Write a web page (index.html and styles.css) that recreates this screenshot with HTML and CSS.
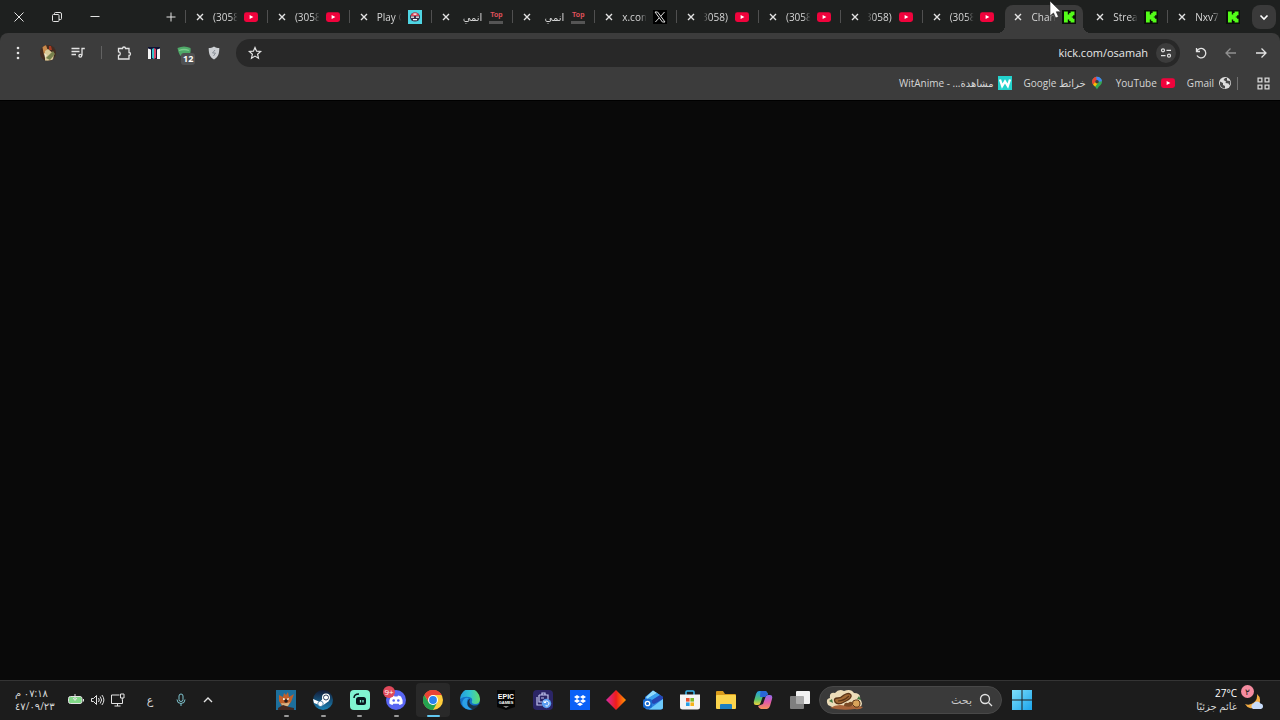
FILE: index.html
```html
<!DOCTYPE html>
<html lang="ar" dir="rtl">
  <head>
    <meta charset="UTF-8" />
    <meta name="viewport" content="width=device-width, initial-scale=1.0" />
    <title>kick.com/osamah</title>
    <link rel="stylesheet" href="styles.css">
  </head>

  <body>
    <!-- shared icons -->
    <svg class="sprite" aria-hidden="true">
      <symbol id="close" viewBox="0 0 10 10"><path d="M2 2l6 6M8 2l-6 6" stroke="#e3e3e3" stroke-width="1.4" /></symbol>
      <symbol id="youtube" viewBox="0 0 14 14">
        <rect x="0" y="2.3" width="14" height="9.6" rx="2.4" fill="#f0033c" />
        <path d="M5.6 5.1l3.8 2-3.8 2z" fill="#fff" />
      </symbol>
      <symbol id="kick" viewBox="0 0 14 14">
        <rect width="14" height="14" fill="#0b0f0a" />
        <path d="M2 1.500h3.800v3h1.400V3h1.400V1.500h3.900v3.800h-1.400v1.300H9.800v.9h1.300v1.300h1.400v3.700H8.600v-1.400H7.200V9.600H5.800v2.900H2z" fill="#53fc18" />
      </symbol>
    </svg>

    <header>
      <div class="tabstrip">
        <button class="tab-search" aria-label="البحث في علامات التبويب">
          <svg viewBox="0 0 24 24"><path d="M8.500 10.500l3.500 3.500 3.500-3.500" /></svg>
        </button>
        <div class="tabs">
          <div class="tab">
            <svg class="favicon"><use href="#kick" /></svg>
            <span class="title" dir="ltr">Nxv7</span>
            <button class="close" aria-label="إغلاق"><svg><use href="#close" /></svg></button>
          </div>
          <div class="tab no-line">
            <svg class="favicon"><use href="#kick" /></svg>
            <span class="title" dir="ltr">Stream</span>
            <button class="close" aria-label="إغلاق"><svg><use href="#close" /></svg></button>
          </div>
          <div class="tab active">
            <svg class="favicon"><use href="#kick" /></svg>
            <span class="title" dir="ltr">Channel</span>
            <button class="close" aria-label="إغلاق"><svg><use href="#close" /></svg></button>
          </div>
          <div class="tab">
            <svg class="favicon"><use href="#youtube" /></svg>
            <span class="title" dir="ltr">(3058)</span>
            <button class="close" aria-label="إغلاق"><svg><use href="#close" /></svg></button>
          </div>
          <div class="tab">
            <svg class="favicon"><use href="#youtube" /></svg>
            <span class="title"><bdo dir="ltr">(3058)</bdo></span>
            <button class="close" aria-label="إغلاق"><svg><use href="#close" /></svg></button>
          </div>
          <div class="tab">
            <svg class="favicon"><use href="#youtube" /></svg>
            <span class="title" dir="ltr">(3058)</span>
            <button class="close" aria-label="إغلاق"><svg><use href="#close" /></svg></button>
          </div>
          <div class="tab">
            <svg class="favicon"><use href="#youtube" /></svg>
            <span class="title"><bdo dir="ltr">(3058)</bdo></span>
            <button class="close" aria-label="إغلاق"><svg><use href="#close" /></svg></button>
          </div>
          <div class="tab">
            <svg class="favicon" viewBox="0 0 14 14">
              <rect width="14" height="14" fill="#000" />
              <path d="M2 2h2.600l7.400 10H9.400z" fill="none" stroke="#ddd" />
              <path d="M11.500 2L7.700 6.300M6.200 7.900L2.400 12" stroke="#ddd" />
            </svg>
            <span class="title" dir="ltr">x.com</span>
            <button class="close" aria-label="إغلاق"><svg><use href="#close" /></svg></button>
          </div>
          <div class="tab">
            <span class="favicon top" dir="ltr">Top</span>
            <span class="title">انمي</span>
            <button class="close" aria-label="إغلاق"><svg><use href="#close" /></svg></button>
          </div>
          <div class="tab">
            <span class="favicon top" dir="ltr">Top</span>
            <span class="title">انمي</span>
            <button class="close" aria-label="إغلاق"><svg><use href="#close" /></svg></button>
          </div>
          <div class="tab">
            <svg class="favicon" viewBox="0 0 14 14">
              <rect width="14" height="14" fill="#4fd5e3" />
              <ellipse cx="7" cy="7" rx="5" ry="4.600" fill="#38304a" />
              <path d="M3 6a4 3.500 0 0 1 8 0z" fill="#d8465a" />
              <path d="M5.500 4.200h3M3 7.200h3M8 7.200h3M5 9.700h4" stroke="#fff" stroke-width="1.200" />
            </svg>
            <span class="title" dir="ltr">Play Games</span>
            <button class="close" aria-label="إغلاق"><svg><use href="#close" /></svg></button>
          </div>
          <div class="tab">
            <svg class="favicon"><use href="#youtube" /></svg>
            <span class="title" dir="ltr">(3058)</span>
            <button class="close" aria-label="إغلاق"><svg><use href="#close" /></svg></button>
          </div>
          <div class="tab">
            <svg class="favicon"><use href="#youtube" /></svg>
            <span class="title" dir="ltr">(3058)</span>
            <button class="close" aria-label="إغلاق"><svg><use href="#close" /></svg></button>
          </div>
        </div>
        <button class="new-tab" aria-label="علامة تبويب جديدة">
          <svg viewBox="0 0 12 12"><path d="M6 1.500v9M1.500 6h9" /></svg>
        </button>
        <div class="window-buttons">
          <button aria-label="تصغير"><svg viewBox="0 0 12 12"><path d="M1.500 5.500h9" /></svg></button>
          <button aria-label="استعادة"><svg viewBox="0 0 12 12"><rect x="1.500" y="3.500" width="6.500" height="7" rx="1" /><path d="M3.500 3.500v-1q0-1 1-1h4.500q1.500 0 1.500 1.500v4.500q0 1-1 1H8" /></svg></button>
          <button aria-label="إغلاق"><svg viewBox="0 0 12 12"><path d="M1.500 1.500l9 9M10.500 1.500l-9 9" /></svg></button>
        </div>
      </div>

      <div class="toolbar">
        <button class="tool" aria-label="رجوع"><svg viewBox="0 0 16 16"><path d="M3 8h10M8.500 3.500L13 8l-4.500 4.500" /></svg></button>
        <button class="tool dim" aria-label="تقدم"><svg viewBox="0 0 16 16"><path d="M13 8H3M7.500 3.500L3 8l4.500 4.500" /></svg></button>
        <button class="tool" aria-label="إعادة التحميل"><svg viewBox="0 0 16 16"><path d="M3.500 3v3.500H7M3.800 6.200A4.700 4.700 0 1 1 4 10.500" /></svg></button>
        <div class="omnibox">
          <button class="site-info" aria-label="معلومات الموقع">
            <svg viewBox="0 0 12 12"><circle cx="3" cy="3.300" r="1.500" /><path d="M6.500 3.300h4.500M1 8.700h4.500" /><circle cx="9" cy="8.700" r="1.500" /></svg>
          </button>
          <input type="text" dir="ltr" value="kick.com/osamah" aria-label="شريط العناوين">
          <button class="star" aria-label="إضافة إشارة">
            <svg viewBox="0 0 16 16"><path d="M8 2.500l1.600 3.700 4 .3-3 2.700.9 4L8 11.100l-3.500 2.100.9-4-3-2.700 4-.3z" /></svg>
          </button>
        </div>
        <button class="tool" aria-label="Shield">
          <svg viewBox="0 0 16 16"><path d="M8 1.500c1.600 1.200 3.400 1.500 5.300 1.500 0 5.500-1 9-5.300 11.500C3.700 12 2.700 8.500 2.700 3c1.900 0 3.700-.3 5.300-1.500z" fill="#cdd0d4" stroke="none" /><path d="M9 5L6.500 8h3L7.500 11" stroke="#8a9098" stroke-width="1" /></svg>
        </button>
        <button class="tool extension" aria-label="إضافة">
          <svg viewBox="0 0 16 16"><path d="M1.500 3Q8 0 14.500 3q1 5-2.500 8l-4 2Q3 12 1.500 3z" fill="#4fa968" stroke="none" /><path d="M3 5.500Q8 3.500 13 5.500" stroke="#7ccc8e" /></svg>
          <span class="count">12</span>
        </button>
        <button class="tool" aria-label="إضافة">
          <svg viewBox="0 0 16 16"><g stroke="none"><rect x="2" y="2" width="12" height="12" fill="#101336" /><path d="M2 3.500l3 1V14H2zM14 3.500l-3 1V14h3z" fill="#f4f4f4" /><path d="M6 4l2-1v11l-2-1z" fill="#35c7cb" /><path d="M8 3l2 1v9l-2 1z" fill="#d94867" /></g></svg>
        </button>
        <button class="tool" aria-label="الإضافات">
          <svg viewBox="0 0 16 16"><path d="M2.500 3.500h4a1.500 1.500 0 0 1 3 0h3.500v4a1.500 1.500 0 0 1 0 3v3.500H2.500v-3.500a1.800 1.800 0 0 0 0-3.600z" /></svg>
        </button>
        <span class="divider"></span>
        <button class="tool" aria-label="الوسائط">
          <svg viewBox="0 0 16 16"><path d="M1.500 3.500h8M1.500 6.500h8M1.500 9.500h4.500M12 10.500V3.500h2.800" /><circle cx="10.300" cy="10.700" r="1.400" /></svg>
        </button>
        <button class="tool" aria-label="الملف الشخصي">
          <svg viewBox="0 0 16 16"><clipPath id="round"><circle cx="8" cy="8" r="8" /></clipPath><g clip-path="url(#round)" stroke="none"><rect width="16" height="16" fill="#432c20" /><path d="M2 0h4l2 6-4 4z" fill="#c88a4b" /><path d="M9 1h2l1 4H9z" fill="#a73a22" /><path d="M5 6l3-2 6 5-1 6-8 1z" fill="#d9cb9a" /><path d="M6 13l7-7 2 3-5 6z" fill="#76804c" /><path d="M4 8l3 2-2 3z" fill="#efe7c8" /></g></svg>
        </button>
        <button class="tool" aria-label="القائمة">
          <svg viewBox="0 0 16 16"><g fill="#e3e3e3" stroke="none"><circle cx="8" cy="3" r="1.300" /><circle cx="8" cy="8" r="1.300" /><circle cx="8" cy="13" r="1.300" /></g></svg>
        </button>
      </div>

      <nav class="bookmarks">
        <button class="apps" aria-label="التطبيقات">
          <svg viewBox="0 0 12 12"><path d="M1 1h3.500v3.500H1zM7.500 1H11v3.500H7.500zM1 7.500h3.500V11H1zM7.500 7.500H11V11H7.500z" /></svg>
        </button>
        <span class="line"></span>
        <a href="#">
          <svg viewBox="0 0 14 14"><circle cx="7" cy="7" r="6" fill="#dedede" /><path d="M2 5.500l3 1.500v2l2 1v2.500Q3 12 2 9zM7 2l-1.500 2L8 5.500 7.500 7l3 .5 1 2Q13 7 12 5L9 4.500V2z" fill="#4a4a4a" /></svg>
          <span>Gmail</span>
        </a>
        <a href="#"><svg><use href="#youtube" /></svg><span>YouTube</span></a>
        <a href="#">
          <svg viewBox="0 0 14 14"><clipPath id="pin"><path d="M7 .8a5 5 0 0 1 5 5C12 9 8.500 10 7 13.500 5.500 10 2 9 2 5.800a5 5 0 0 1 5-5z" /></clipPath><g clip-path="url(#pin)"><rect width="14" height="14" fill="#34a853" /><path d="M0 0h7v5L2 10H0z" fill="#ea4335" /><path d="M6 0h8v5L7 6z" fill="#4285f4" /><path d="M2 10l4-5 2 2-4 5z" fill="#fbbc04" /></g><circle cx="7" cy="5.700" r="1.800" fill="#3c3c3c" /></svg>
          <span>خرائط Google</span>
        </a>
        <a href="#">
          <svg viewBox="0 0 14 14"><rect width="14" height="14" fill="#23d3cd" /><path d="M2 3.500l2.200 6.500L7 5.500 9.800 10 12 3.500" fill="none" stroke="#fff" stroke-width="2.300" /></svg>
          <span>مشاهدة... - WitAnime</span>
        </a>
      </nav>
    </header>

    <main></main>

    <footer>
      <div class="weather">
        <div class="weather-icon">
          <svg viewBox="0 0 24 24"><path d="M16 5a8 8 0 1 1-12 10 9 9 0 0 0 12-10z" fill="#f5ad43" /><path d="M12 20a3 3 0 0 1 .5-5.500 4 4 0 0 1 7 0A2.800 2.800 0 0 1 20 20z" fill="#c8dcfa" /></svg>
          <span>٢</span>
        </div>
        <div class="weather-text">
          <b dir="ltr">27°C</b>
          <span>غائم جزئيًا</span>
        </div>
      </div>

      <button class="start" aria-label="ابدأ">
        <svg viewBox="0 0 20 20"><linearGradient id="win" x2="1" y2="1"><stop stop-color="#7fe0fb" /><stop offset="1" stop-color="#1ba4ea" /></linearGradient><path d="M0 0h9.500v9.500H0zM10.500 0H20v9.500h-9.500zM0 10.500h9.500V20H0zM10.500 10.500H20V20h-9.500z" fill="url(#win)" /></svg>
      </button>

      <div class="search">
        <svg class="magnifier" viewBox="0 0 14 14"><circle cx="6" cy="6" r="4.500" /><path d="M9.500 9.500l3.500 3.500" /></svg>
        <input type="search" placeholder="بحث" aria-label="بحث">
        <svg class="doodle" viewBox="0 0 38 22">
          <path d="M2 16Q-1 10 4 9 3 3 9 4q4-5 9-2 7-3 10 2 7 0 6 6 4 5 0 8H6z" fill="#ecdcb8" />
          <path d="M4 19q8-5 16-2 8-2 17 1-2 3-8 2-12 2-25-1z" fill="#a8643a" />
          <path d="M9 13q-2-4 3-4 3 0 6-3 5-3 7 0 1 3-5 6-8 5-11 1z" fill="#a26a35" stroke="#5c3518" stroke-width="1.300" />
          <path d="M12 12q6 0 11-5" fill="none" stroke="#5c3518" stroke-width="1.200" />
          <path d="M18 17q0-4 4-3 4-3 5 1-1 4-9 2z" fill="#7a4a25" />
          <path d="M27 12q6-3 7 2 0 5-5 4-4-2-2-6z" fill="#d9a35a" stroke="#5c3518" />
          <path d="M3 12l3-2 1 4zM31 10l2-3 2 4z" fill="#3f7a42" />
        </svg>
      </div>

      <div class="apps-list">
        <button aria-label="Task View"><svg viewBox="0 0 20 20"><rect x="6" y="1" width="14" height="13" rx="1" fill="#f1f1f1" /><rect x="0" y="6" width="14" height="13" rx="1" fill="#999" opacity=".8" /></svg></button>
        <button aria-label="Copilot"><svg viewBox="0 0 20 20"><linearGradient id="cpa" x2="0" y2="1"><stop stop-color="#219be9" /><stop offset=".6" stop-color="#58c46c" /><stop offset="1" stop-color="#f3d237" /></linearGradient><linearGradient id="cpb" x2="0" y2="1"><stop stop-color="#8e6bef" /><stop offset=".5" stop-color="#e35aa8" /><stop offset="1" stop-color="#f79358" /></linearGradient><path d="M6 1h6q2 0 3 3L10 6 7.500 13Q7 15 5 15H3q-3 0-2-4L3 4q1-3 3-3z" fill="url(#cpa)" /><path d="M14 19H8q-2 0-3-3l5-2 2.500-7Q13 5 15 5h2q3 0 2 4l-2 7q-1 3-3 3z" fill="url(#cpb)" /><path d="M7.500 1H12q2 0 3 4-2 0-2.500 2H7z" fill="#2866d8" /></svg></button>
        <button aria-label="File Explorer"><svg viewBox="0 0 20 20"><path d="M0 2q0-1 1-1h6l2 3h10q1 0 1 1v4H0z" fill="#d99b1c" /><rect y="5" width="20" height="14" rx="1" fill="#fbd44d" /><path d="M4 19v-4q0-1 1-1h10q1 0 1 1v4z" fill="#1d7fc4" /></svg></button>
        <button aria-label="Store"><svg viewBox="0 0 20 20"><path d="M6 5V2q0-1 1-1h6q1 0 1 1v3" fill="none" stroke="#39b6ed" stroke-width="1.500" /><path d="M0 4.500h20V17q0 2.500-2.500 2.500h-15Q0 19.500 0 17z" fill="#f4f4f4" /><path d="M6 8h3.600v3.600H6z" fill="#e8502f" /><path d="M10.400 8H14v3.600h-3.600z" fill="#7db928" /><path d="M6 12.400h3.600V16H6z" fill="#26a0e6" /><path d="M10.400 12.400H14V16h-3.600z" fill="#f6b31a" /></svg></button>
        <button aria-label="Outlook"><svg viewBox="0 0 20 20"><path d="M2 7l8-6.500L20 7v10q0 2.500-2.500 2.500h-13Q2 19.500 2 17z" fill="#2b7de0" /><path d="M3 7l7-6.500L14 3 4 9z" fill="#8fdcfd" /><path d="M4 9l10-6 3 2-11 7z" fill="#3aa2f0" /><path d="M6 12l11-7 3 2v2l-9 5z" fill="#2546b4" /><path d="M20 9v8q0 2.500-2.500 2.500H6z" fill="#6cc9fb" /><rect y="9" width="9" height="9" rx="2" fill="#1769cf" /><circle cx="4.500" cy="13.500" r="2.200" fill="none" stroke="#fff" stroke-width="1.300" /></svg></button>
        <button aria-label="Diamond"><svg viewBox="0 0 20 20"><linearGradient id="dia" x2="1"><stop stop-color="#d52ba6" /><stop offset=".5" stop-color="#ef1c1c" /><stop offset="1" stop-color="#ff9a00" /></linearGradient><path d="M10 0l10 10-10 10L0 10z" fill="url(#dia)" /></svg></button>
        <button aria-label="Dropbox"><svg viewBox="0 0 20 20"><rect width="20" height="20" fill="#0a61f7" /><path d="M7 5l3 2-3 2-3-2zM13 5l3 2-3 2-3-2zM7 9l3 2-3 2-3-2zM13 9l3 2-3 2-3-2zM10 12.500l3 1.700-3 1.800-3-1.800z" fill="#fff" /></svg></button>
        <button aria-label="Backup"><svg viewBox="0 0 20 20"><rect width="20" height="20" rx="4" fill="#2b2566" /><path d="M4 7v8h5M6 5h9v4M6 5v7h3M9 5V3h3v2M8 8h3" fill="none" stroke="#c3c6ef" stroke-width="1.200" /><circle cx="13.500" cy="13.500" r="4.700" fill="#5a9df0" /><path d="M11.500 12a2.500 2.500 0 1 1 1 3.800M11 10.500v2h2" fill="none" stroke="#fff" /></svg></button>
        <button aria-label="Epic Games"><svg viewBox="0 0 20 20"><path d="M1 0h18v17l-9 3-9-3z" fill="#050505" /><text x="10" y="9" text-anchor="middle" font-family="Liberation Sans" font-size="7" font-weight="bold" fill="#fff">EPIC</text><text x="10" y="14" text-anchor="middle" font-family="Liberation Sans" font-size="4" font-weight="bold" fill="#fff">GAMES</text><path d="M7 16.500h6l-3 1z" fill="#fff" /></svg></button>
        <button aria-label="Edge"><svg viewBox="0 0 20 20"><linearGradient id="edge" x2="1"><stop stop-color="#249be1" /><stop offset=".5" stop-color="#30c4d1" /><stop offset="1" stop-color="#63dc68" /></linearGradient><circle cx="10" cy="10" r="10" fill="#1471c8" /><path d="M0 9A10 10 0 0 1 20 9q0 5-5 5-4 0-3-3 1-3-3-4-5-1-9 2z" fill="url(#edge)" /><path d="M7 11q-1 6 5 8-5 2-9-3-2-4 1-7 2-2 5-1-2 1-2 3z" fill="#2ba0e8" /><path d="M10 9q-2 4 2 6 4 1.500 7-1l1 2-3 3-4 .500q-6-2-5.500-7Q8 9 10 9z" fill="#1c1c1c" opacity=".75" /></svg></button>
        <button class="current" aria-label="Chrome"><svg viewBox="0 0 20 20"><circle cx="10" cy="10" r="10" fill="#ffcd3c" /><path d="M10 10V5h8.700A10 10 0 0 0 1.300 5l4.400 7.500z" fill="#e94335" /><path d="M1.300 5A10 10 0 0 0 10 20l4.300-7.500H5.700z" fill="#24a350" /><circle cx="10" cy="10" r="5" fill="#fff" /><circle cx="10" cy="10" r="3.900" fill="#2a82ee" /></svg></button>
        <button class="running" aria-label="Discord"><svg viewBox="0 0 20 20"><circle cx="10" cy="10" r="10" fill="#5865f2" /><path d="M5 6.500q2-1 3-1l.5 1h3l.5-1q1 0 3 1 2 3 1.700 7-1.700 1.300-3.200 1.500l-.8-1.300H7.300L6.500 15Q5 14.800 3.300 13.500 3 9.500 5 6.500z" fill="#fff" /><circle cx="7.700" cy="10.500" r="1.300" fill="#5865f2" /><circle cx="12.300" cy="10.500" r="1.300" fill="#5865f2" /></svg><span class="badge" dir="ltr">9+</span></button>
        <button class="running" aria-label="Streamlabs"><svg viewBox="0 0 20 20"><rect width="20" height="20" rx="4" fill="#80f5d2" /><rect x="6" y="7" width="10" height="8" rx="2.500" fill="#09161d" /><path d="M4 8q0-4 5-4" fill="none" stroke="#09161d" stroke-width="1.500" /><path d="M10.500 10v2.500M13 10v2.500" stroke="#80f5d2" stroke-width="1.300" /></svg></button>
        <button class="running" aria-label="Steam"><svg viewBox="0 0 20 20"><linearGradient id="steam" x2="0" y2="1"><stop stop-color="#121a35" /><stop offset="1" stop-color="#1b83b6" /></linearGradient><circle cx="10" cy="10" r="10" fill="url(#steam)" /><path d="M0 9l7 3 4-5 5 4-7 5-8-3z" fill="#fff" /><circle cx="13" cy="7.500" r="4" fill="#fff" /><circle cx="13" cy="7.500" r="2.500" fill="#fff" stroke="#1b3155" stroke-width=".9" /><circle cx="7.500" cy="13.800" r="2.700" fill="#fff" stroke="#1a5d8c" stroke-width=".7" /></svg></button>
        <button class="running" aria-label="Crash Bandicoot"><svg viewBox="0 0 20 20"><rect width="20" height="20" fill="#1d6f9c" /><path d="M3 5l4 2 1-4 2 2 2-3 1 5 5-3-3 8-4 5-5-1-3-5z" fill="#c1602a" /><path d="M7 8l2 .500v1.500H7zM11 8.500l2-.500-.5 2H11z" fill="#f3e9d8" /><circle cx="10" cy="11" r="1.800" fill="#251a1a" /><path d="M5 13q6 1 9-1l-2 4-5 1z" fill="#d8b384" /><path d="M2 18l5-3 6 2 5 1v2H2z" fill="#442921" /></svg></button>
      </div>

      <div class="tray">
        <button class="more" aria-label="إظهار الرموز المخفية"><svg viewBox="0 0 12 12"><path d="M2 8l4-4 4 4" /></svg></button>
        <button class="mic" aria-label="الميكروفون"><svg viewBox="0 0 12 14"><rect x="4" y="1" width="4" height="7.500" rx="2" /><path d="M2 6.500q0 4 4 4t4-4M6 10.500V13" /></svg></button>
        <button class="lang" aria-label="لغة الإدخال">ع</button>
        <button class="status" aria-label="الشبكة والصوت والبطارية">
          <svg class="network" viewBox="0 0 14 14"><path d="M9 2H1v8.500h11V7M7 10.500v2.500M4 13h6" /><path d="M10 1h3.500v4H10zM11.800 5v2.500" /></svg>
          <svg class="sound" viewBox="0 0 14 14"><path d="M1 5.500h2L6 2.500v9L3 8.500H1zM8 5q1.500 2 0 4M9.700 3.500q2.800 3.500 0 7M11.400 2q4 5 0 10" /></svg>
          <svg class="battery" viewBox="0 0 18 14"><rect x="1.500" y="3.500" width="13.500" height="7" rx="2" fill="#81d987" /><path d="M16.500 6v2.500" /><path d="M8 1v6M6 5l2 2.500L10 5" /></svg>
        </button>
        <div class="clock">
          <span>٠٧:١٨ م</span>
          <span dir="ltr">٤٧/٠٩/٢٣</span>
        </div>
      </div>
    </footer>

    <svg class="cursor" viewBox="0 0 14 20"><path d="M2 1v15l3.500-3 2.200 5 2.800-1.200-2.200-5H13z" fill="#fff" stroke="#222" stroke-width=".6" /></svg>
  </body>
</html>
```

FILE: styles.css
```css
html,
body {
  margin: 0;
  padding: 0;
  height: 100%;
}

body {
  display: flex;
  flex-direction: column;
  overflow: hidden;
  background: #090909;
  color: #d6d6d6;
  font-family: "Open Sans", "DejaVu Sans", sans-serif;
  font-size: 10px;
}

* {
  box-sizing: border-box;
}

button {
  display: flex;
  align-items: center;
  justify-content: center;
  flex-shrink: 0;
  border: none;
  padding: 0;
  background: none;
  color: inherit;
  font: inherit;
  cursor: pointer;
}

input {
  border: none;
  outline: none;
  padding: 0;
  min-width: 0;
  background: none;
  color: inherit;
  font: inherit;
}

svg {
  flex-shrink: 0;
}

.sprite {
  position: absolute;
  width: 0;
  height: 0;
}

header {
  flex-shrink: 0;
  background: #1e201f;
  border-bottom: 1px solid #000;
}

/* tabs */
.tabstrip {
  display: flex;
  align-items: center;
  height: 33px;
  padding-right: 4px;
}

.tab-search {
  width: 24px;
  height: 24px;
  border-radius: 8px;
  background: #3a3a3a;
}

.tab-search svg {
  width: 24px;
  height: 24px;
  fill: none;
  stroke: #fff;
  stroke-width: 1.6;
}

.tabs {
  display: flex;
  flex: 1;
  min-width: 0;
  margin-right: 3px;
}

.tab {
  position: relative;
  display: flex;
  flex: 1;
  align-items: center;
  min-width: 0;
  height: 33px;
  padding: 0 9px 0 10px;
}

.tab::after {
  content: "";
  position: absolute;
  left: 0;
  top: 10px;
  width: 1px;
  height: 13px;
  background: #505050;
}

.tab.no-line::after,
.tab.active::after {
  display: none;
}

.tab.active {
  height: 28px;
  margin: 5px 2px 0;
  padding: 0 7px 5px 8px;
  border-radius: 8px 8px 0 0;
  background: #3c3c3c;
}

.tab.active::before,
.tab.active::after {
  content: "";
  display: block;
  position: absolute;
  top: auto;
  bottom: 0;
  width: 8px;
  height: 8px;
}

.tab.active::before {
  right: -8px;
  background: radial-gradient(circle at 100% 0, transparent 8px, #3c3c3c 8px);
}

.tab.active::after {
  left: -8px;
  background: radial-gradient(circle at 0 0, transparent 8px, #3c3c3c 8px);
}

.favicon {
  flex-shrink: 0;
  width: 14px;
  height: 14px;
}

.favicon.top {
  border-bottom: 3px solid #555;
  color: #e0525c;
  font: bold 7px/10px "Liberation Sans", sans-serif;
  text-align: center;
}

.title {
  flex: 1;
  min-width: 0;
  margin: 0 5px 0 6px;
  padding: 0 2px;
  overflow: hidden;
  white-space: nowrap;
  line-height: 16px;
  mask-image: linear-gradient(to left, #000 70%, transparent 95%);
  mask-repeat: no-repeat;
}

.title[dir="ltr"] {
  mask-image: linear-gradient(to right, #000 70%, transparent 95%);
}

.close,
.close svg {
  width: 10px;
  height: 10px;
}

.new-tab {
  width: 28px;
  height: 28px;
}

.window-buttons {
  display: flex;
  margin-right: 43px;
}

.window-buttons button {
  width: 38px;
  height: 33px;
}

.new-tab svg,
.window-buttons svg {
  width: 12px;
  height: 12px;
  fill: none;
  stroke: #e3e3e3;
}

/* toolbar */
.toolbar {
  display: flex;
  align-items: center;
  height: 34px;
  padding: 5px 4px 0 3px;
  border-radius: 8px 8px 0 0;
  background: #3c3c3c;
}

.tool {
  position: relative;
  width: 30px;
  height: 28px;
}

.tool svg {
  width: 16px;
  height: 16px;
  fill: none;
  stroke: #e3e3e3;
  stroke-width: 1.3;
}

.tool.dim {
  opacity: 0.5;
}

.omnibox {
  display: flex;
  flex: 1;
  align-items: center;
  height: 28px;
  margin: 0 6px 0 7px;
  padding: 0 4px 0 11px;
  border-radius: 14px;
  background: #282828;
}

.omnibox input {
  flex: 1;
  margin-right: 8px;
  color: #e8e8e8;
  font-size: 11px;
  text-align: right;
}

.site-info {
  width: 20px;
  height: 20px;
  border-radius: 50%;
  background: #3c3c3c;
}

.site-info svg {
  width: 12px;
  height: 12px;
}

.star svg {
  width: 16px;
  height: 16px;
}

.omnibox svg {
  fill: none;
  stroke: #e3e3e3;
  stroke-width: 1.2;
}

.count {
  position: absolute;
  left: 12px;
  bottom: 2px;
  padding: 0 2px;
  border-radius: 3px;
  background: #505152;
  color: #fff;
  font-size: 9px;
  font-weight: bold;
  line-height: 12px;
}

.divider {
  width: 16px;
  height: 13px;
  background: linear-gradient(#626262, #626262) center / 1px 100% no-repeat;
}

/* bookmarks */
.bookmarks {
  display: flex;
  align-items: center;
  height: 33px;
  padding: 0 10px 1px;
  background: #3c3c3c;
}

.bookmarks a {
  display: flex;
  align-items: center;
  gap: 4px;
  margin-left: 12px;
  color: #d6d6d6;
  text-decoration: none;
  white-space: nowrap;
}

.bookmarks a svg {
  width: 14px;
  height: 14px;
}

.apps svg {
  width: 13px;
  height: 13px;
  fill: none;
  stroke: #d6d6d6;
  stroke-width: 1.2;
}

.line {
  width: 1px;
  height: 13px;
  margin: 0 19px 0 5px;
  background: #707070;
}

main {
  flex-grow: 1;
}

/* taskbar */
footer {
  display: flex;
  flex-shrink: 0;
  align-items: center;
  height: 40px;
  padding-bottom: 2px;
  border-top: 1px solid #343434;
  background: #1c1c1c;
}

.weather {
  display: flex;
  align-items: center;
  gap: 4px;
  width: 240px;
  padding-right: 15px;
}

.weather-icon {
  position: relative;
  width: 24px;
  height: 32px;
  padding-top: 5px;
}

.weather-icon svg {
  width: 24px;
  height: 24px;
}

.weather-icon span {
  position: absolute;
  left: 0;
  top: 1px;
  width: 13px;
  height: 13px;
  border-radius: 50%;
  background: #f58ca0;
  color: #222;
  font-size: 9px;
  line-height: 13px;
  text-align: center;
}

.weather-text,
.clock {
  display: flex;
  flex-direction: column;
  line-height: 13px;
}

.weather-text b {
  color: #fff;
  font-weight: 500;
  text-align: right;
}

.start {
  width: 36px;
  height: 36px;
}

.start svg {
  width: 20px;
  height: 20px;
}

.search {
  display: flex;
  align-items: center;
  width: 183px;
  height: 28px;
  margin-right: 2px;
  padding: 0 8px 0 6px;
  border: 1px solid #484848;
  border-radius: 14px;
  background: #3a3a3a;
}

.search input {
  flex: 1;
  margin-right: 7px;
  font-size: 11px;
}

.search input::placeholder {
  color: #c8c8c8;
}

.magnifier {
  width: 14px;
  height: 14px;
  fill: none;
  stroke: #e3e3e3;
  stroke-width: 1.3;
}

.doodle {
  width: 38px;
  height: 22px;
}

.apps-list {
  display: grid;
  grid-template-columns: repeat(15, 1fr);
  width: 550px;
  margin-right: 1px;
}

.apps-list button {
  position: relative;
  height: 34px;
  margin: 0 1px;
  border-radius: 4px;
}

.apps-list svg {
  width: 20px;
  height: 20px;
}

.apps-list .current {
  background: #292929;
}

.running::after,
.current::after {
  content: "";
  position: absolute;
  bottom: 0;
  width: 5px;
  height: 2px;
  border-radius: 1px;
  background: #9a9a9a;
}

.current::after {
  width: 13px;
  background: #62c8f0;
}

.badge {
  position: absolute;
  left: 4px;
  top: 3px;
  width: 12px;
  height: 12px;
  border-radius: 50%;
  background: #e0495a;
  color: #fff;
  font-size: 8px;
  line-height: 12px;
}

.tray {
  display: flex;
  flex: 1;
  align-items: center;
  justify-content: flex-end;
  padding-left: 15px;
}

.tray svg {
  height: 14px;
  fill: none;
  stroke: #e3e3e3;
}

.more svg {
  width: 12px;
  stroke-width: 1.4;
}

.mic {
  margin-right: 15px;
}

.mic svg {
  width: 12px;
  stroke: #7fc4cf;
}

.lang {
  width: 16px;
  margin: 0 17px;
  font-size: 11px;
}

.status {
  gap: 5px;
  margin-left: 14px;
}

.network,
.sound {
  width: 15px;
}

.battery {
  width: 18px;
}

.clock {
  width: 38px;
  text-align: left;
  white-space: nowrap;
}

.cursor {
  position: absolute;
  left: 1048px;
  top: 0;
  width: 14px;
  height: 20px;
}
```
